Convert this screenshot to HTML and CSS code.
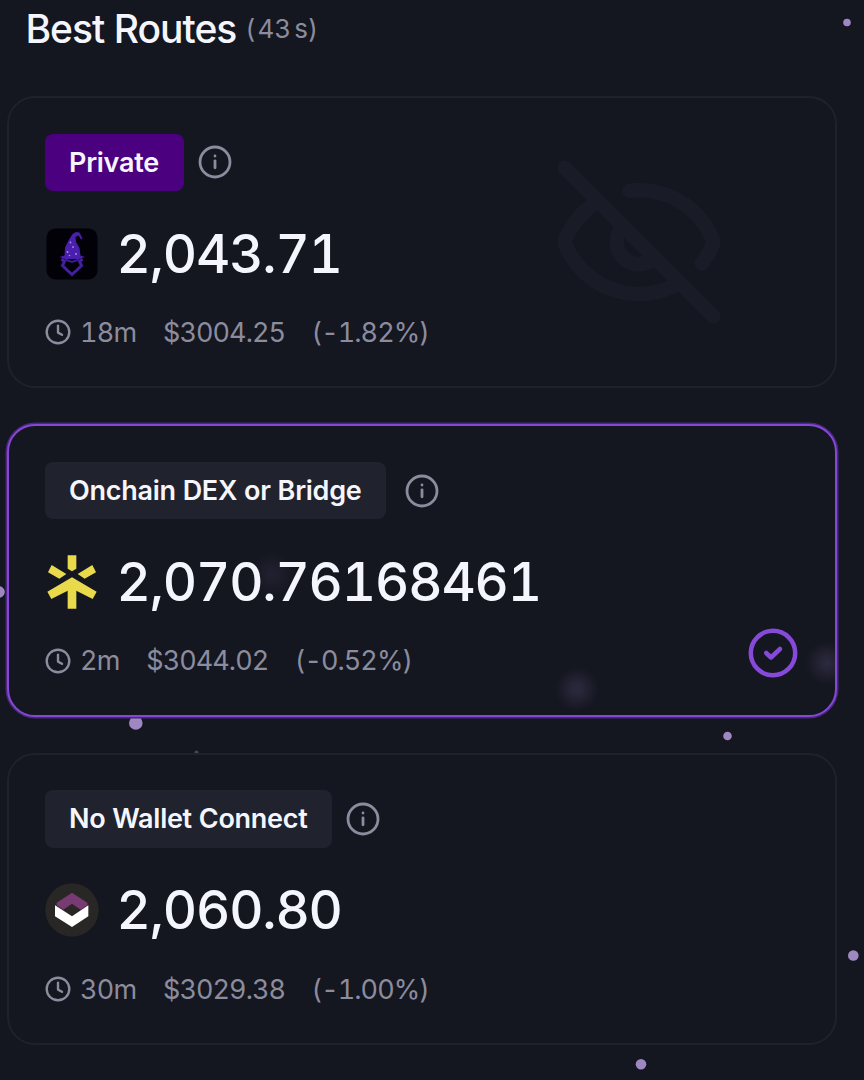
FILE: index.html
```
<!DOCTYPE html>
<html lang="en">
<head>
    <meta charset="UTF-8">
    <meta name="viewport" content="width=device-width, initial-scale=1.0">
    <title>Best Routes</title>
    <link rel="stylesheet" href="styles.css">
</head>
<body>

    <!-- floating particles -->
    <svg class="particles" width="864" height="1080" viewBox="0 0 864 1080">
        <circle cx="847" cy="22.5" r="3.8"/>
        <circle cx="-1" cy="592" r="5.8"/>
        <circle cx="135.8" cy="723" r="6.8"/>
        <circle cx="727.5" cy="736" r="4.3"/>
        <circle cx="196.5" cy="752.5" r="2" opacity="0.4"/>
        <circle cx="853.3" cy="955.5" r="5.3"/>
        <circle cx="641" cy="1064.3" r="5.3"/>
    </svg>

    <main class="routes">
        <header class="routes-header">
            <h1>Best Routes</h1>
            <span class="countdown">(<span class="seconds">43</span>s)</span>
        </header>

        <section class="card">
            <svg class="hidden-eye" viewBox="0 0 24 24">
                <path d="M10.733 5.076a10.744 10.744 0 0 1 11.205 6.575 1 1 0 0 1 0 .696 10.747 10.747 0 0 1-1.444 2.49"/>
                <path d="M14.084 14.158a3 3 0 0 1-4.242-4.242"/>
                <path d="M17.479 17.499a10.75 10.75 0 0 1-15.417-5.151 1 1 0 0 1 0-.696 10.75 10.75 0 0 1 4.446-5.143"/>
                <path d="m2 2 20 20"/>
            </svg>
            <div class="card-top">
                <span class="badge badge-private">Private</span>
                <svg class="info" viewBox="0 0 34 34">
                    <circle cx="17" cy="17" r="15"/>
                    <path d="M17 15.8v7"/>
                    <path d="M17 11v.1"/>
                </svg>
            </div>
            <div class="amount">
                <svg class="logo" viewBox="0 0 54 54">
                    <rect x="1.5" y="1.5" width="51" height="51" rx="9" fill="#020108"/>
                    <path d="M37.500 11.500l-1.500 1-2.500-4-3 1.500 .5 5 3.500 6 1 7.500 4.500 1.500-6 2H20l-5.500-2 5-1.500.5-8 3.500-7 4-6.500 3.500-2 3.500.5z" fill="#4a1fae"/>
                    <path d="M16.500 32l3 2.500-2 4 4 4 5.500 5 5.500-5 4-4-2-4 3-2.500" fill="none" stroke="#42219f" stroke-width="3"/>
                    <path d="M20 32.500l7 2.500 7-2.500" fill="none" stroke="#3a1d90" stroke-width="2"/>
                    <g fill="#a58ae6">
                        <circle cx="25.500" cy="15.500" r=".9"/>
                        <circle cx="28" cy="20" r=".9"/>
                        <circle cx="22.500" cy="25" r="1"/>
                        <circle cx="31" cy="27" r="1"/>
                        <circle cx="24.500" cy="28.500" r=".8"/>
                    </g>
                </svg>
                <span>2,043.71</span>
            </div>
            <div class="meta">
                <span class="time">
                    <svg class="clock" viewBox="0 0 26 26"><circle cx="13" cy="13" r="11.300"/><path d="M13 6.800v6.800l4 2.200"/></svg>
                    18m
                </span>
                <span>$3004.25</span>
                <span>(-1.82%)</span>
            </div>
        </section>

        <section class="card selected">
            <i class="glow glow-digit"></i>
            <i class="glow glow-bottom"></i>
            <i class="glow glow-right"></i>
            <div class="card-top">
                <span class="badge">Onchain DEX or Bridge</span>
                <svg class="info wide" viewBox="0 0 34 34">
                    <circle cx="17" cy="17" r="15"/>
                    <path d="M17 15.8v7"/>
                    <path d="M17 11v.1"/>
                </svg>
            </div>
            <div class="amount">
                <svg class="logo" viewBox="43 43 162 162" fill="#e9da4b">
                    <path d="M111 44h26v40l-13 8-13-8z"/>
                    <path d="M63 73l44 27-21 14-34-19z"/>
                    <path d="M185 73l-44 27 21 14 34-19z"/>
                    <path d="M124 110l74 43-12 22-49-25v54h-26v-54l-49 25-12-22z"/>
                </svg>
                <span>2,070.76168461</span>
            </div>
            <div class="meta">
                <span class="time">
                    <svg class="clock" viewBox="0 0 26 26"><circle cx="13" cy="13" r="11.300"/><path d="M13 6.800v6.800l4 2.200"/></svg>
                    2m
                </span>
                <span>$3044.02</span>
                <span>(-0.52%)</span>
            </div>
            <svg class="check" viewBox="0 0 50 50">
                <circle cx="25" cy="25" r="22.200"/>
                <path d="M18.200 25l4.800 4.500 9-8.500"/>
            </svg>
        </section>

        <section class="card">
            <div class="card-top">
                <span class="badge">No Wallet Connect</span>
                <svg class="info" viewBox="0 0 34 34">
                    <circle cx="17" cy="17" r="15"/>
                    <path d="M17 15.8v7"/>
                    <path d="M17 11v.1"/>
                </svg>
            </div>
            <div class="amount">
                <svg class="logo" viewBox="44 308 162 162">
                    <circle cx="125" cy="389" r="80" fill="#282725"/>
                    <path d="M125 337l46 30v8l-20 13-26-18-26 18-20-13v-8z" fill="#773a73"/>
                    <path d="M74 375l51 33 49-33v33l-49 32-51-32z" fill="#fff"/>
                </svg>
                <span>2,060.80</span>
            </div>
            <div class="meta">
                <span class="time">
                    <svg class="clock" viewBox="0 0 26 26"><circle cx="13" cy="13" r="11.300"/><path d="M13 6.800v6.800l4 2.200"/></svg>
                    30m
                </span>
                <span>$3029.38</span>
                <span>(-1.00%)</span>
            </div>
        </section>
    </main>

</body>
</html>
```

FILE: styles.css
```
* {
    margin: 0;
    padding: 0;
    box-sizing: border-box;
}
body {
    background: #141620;
    color: #f5f6fd;
    font-family: 'Inter', sans-serif;
    font-variant-numeric: tabular-nums;
    height: 1080px;
    overflow: hidden;
}
.particles {
    position: absolute;
    top: 0;
    left: 0;
    fill: #9f87c2;
}
.routes {
    position: relative;
    display: flex;
    flex-direction: column;
    gap: 36px;
    padding: 0 27px 0 7px;
}
.routes-header {
    display: flex;
    align-items: center;
    gap: 9px;
    height: 60px;
    padding: 0 0 4px 18.5px;
}
h1 {
    font-size: 39px;
    font-weight: 500;
    letter-spacing: -1px;
}
.countdown {
    font-size: 26px;
    color: #8b8c9d;
}
.seconds {
    margin: 0 3px 0 2px;
}
.card {
    position: relative;
    isolation: isolate;
    display: flex;
    flex-direction: column;
    height: 292.4px;
    padding: 35.5px;
    border: 2px solid #1f212b;
    border-radius: 28px;
    background: #141620;
}
.selected {
    border-color: #8548d4;
    box-shadow: 0 0 0 1.5px #4b2780;
}
.card-top {
    display: flex;
    align-items: center;
    gap: 14px;
    height: 57.5px;
}
.badge {
    height: 57.5px;
    padding: 0 24.5px;
    border-radius: 8px;
    background: #20222e;
    font-size: 27px;
    font-weight: 600;
    letter-spacing: -0.28px;
    line-height: 57px;
}
.badge-private {
    padding-right: 25.5px;
    background: #4a007f;
}
.info {
    width: 34px;
    height: 34px;
    fill: none;
    stroke: #8b8c9d;
    stroke-width: 2.8;
    stroke-linecap: round;
}
.info.wide {
    margin-left: 5px;
}
.amount {
    display: flex;
    align-items: center;
    gap: 18px;
    height: 64px;
    margin-top: 30.5px;
    font-size: 53px;
    font-weight: 500;
    letter-spacing: -1.15px;
}
.logo {
    width: 54px;
    height: 54px;
}
.meta {
    display: flex;
    align-items: center;
    gap: 26.5px;
    height: 40px;
    margin-top: 28.5px;
    color: #8b8c9d;
    font-size: 27px;
    letter-spacing: -0.95px;
}
.time {
    display: flex;
    align-items: center;
    gap: 9.5px;
    letter-spacing: -0.7px;
}
.clock {
    width: 26px;
    height: 26px;
    fill: none;
    stroke: #8b8c9d;
    stroke-width: 2.4;
    stroke-linecap: round;
    stroke-linejoin: round;
}
.hidden-eye {
    position: absolute;
    top: 55px;
    left: 541px;
    width: 178px;
    height: 178px;
    fill: none;
    stroke: #191b27;
    stroke-width: 2;
    stroke-linecap: round;
    stroke-linejoin: round;
}
.check {
    position: absolute;
    right: 37.5px;
    bottom: 37px;
    width: 50px;
    height: 50px;
    fill: none;
    stroke: #8749d9;
    stroke-width: 4.5;
    stroke-linecap: round;
    stroke-linejoin: round;
}
/* particles seen through the card */
.glow {
    position: absolute;
    z-index: -1;
    width: 44px;
    height: 44px;
    border-radius: 50%;
    background: radial-gradient(closest-side, #2e2a40, #2a273a 25%, rgba(20, 22, 32, 0));
}
.glow-digit {
    top: 126px;
    left: 241px;
    opacity: 0.5;
}
.glow-bottom {
    top: 241px;
    left: 546px;
    opacity: 0.9;
}
.glow-right {
    top: 215px;
    right: 0;
    width: 30px;
    background: radial-gradient(circle 22px at 22px 22px, #2e2a40, rgba(20, 22, 32, 0));
    border-radius: 0;
}
```
